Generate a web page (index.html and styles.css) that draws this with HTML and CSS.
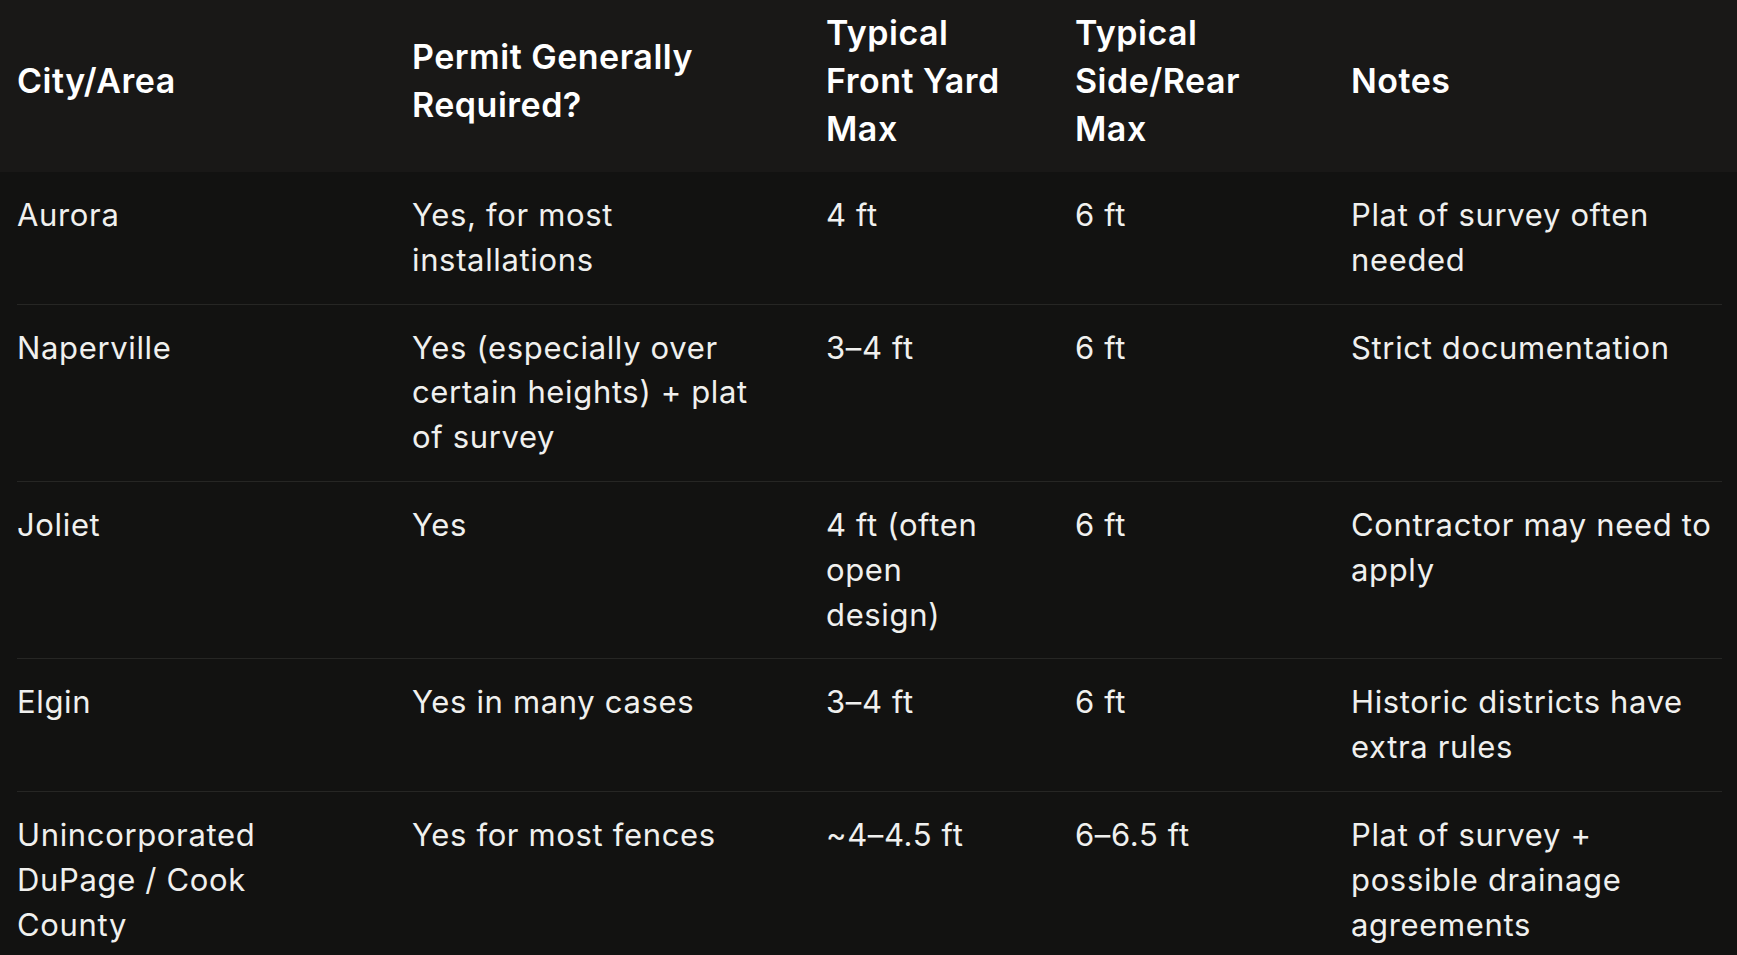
FILE: index.html
```html
<!DOCTYPE html>
<html>
<head>
<meta charset="utf-8">
<link rel="stylesheet" href="styles.css">
</head>
<body>
<div class="table">
  <div class="head">
    <div class="cell c1">City/Area</div>
    <div class="cell c2">Permit Generally Required?</div>
    <div class="cell c3">Typical Front Yard Max</div>
    <div class="cell c4">Typical Side/Rear Max</div>
    <div class="cell c5">Notes</div>
  </div>
  <div class="row">
    <div class="cell c1">Aurora</div>
    <div class="cell c2">Yes, for most installations</div>
    <div class="cell c3">4 ft</div>
    <div class="cell c4">6 ft</div>
    <div class="cell c5">Plat of survey often needed</div>
  </div>
  <div class="row">
    <div class="cell c1">Naperville</div>
    <div class="cell c2">Yes (especially over certain heights) + plat of survey</div>
    <div class="cell c3">3–4 ft</div>
    <div class="cell c4">6 ft</div>
    <div class="cell c5">Strict documentation</div>
  </div>
  <div class="row">
    <div class="cell c1">Joliet</div>
    <div class="cell c2">Yes</div>
    <div class="cell c3">4 ft (often open design)</div>
    <div class="cell c4">6 ft</div>
    <div class="cell c5">Contractor may need to apply</div>
  </div>
  <div class="row">
    <div class="cell c1">Elgin</div>
    <div class="cell c2">Yes in many cases</div>
    <div class="cell c3">3–4 ft</div>
    <div class="cell c4">6 ft</div>
    <div class="cell c5">Historic districts have extra rules</div>
  </div>
  <div class="row last">
    <div class="cell c1">Unincorporated DuPage / Cook County</div>
    <div class="cell c2">Yes for most fences</div>
    <div class="cell c3">~4–4.5 ft</div>
    <div class="cell c4">6–6.5 ft</div>
    <div class="cell c5">Plat of survey + possible drainage agreements</div>
  </div>
</div>
</body>
</html>
```

FILE: styles.css
```css
html, body {
  margin: 0;
  padding: 0;
  background: #121211;
  height: 100%;
  overflow: hidden;
}
body {
  font-family: Inter, "Noto Sans", sans-serif;
  color: #f0f0ee;
}
.table {
  width: 1737px;
}
.head, .row {
  display: grid;
  grid-template-columns: 395px 414px 249px 276px 1fr;
}
.head {
  box-sizing: border-box;
  background: #191817;
  height: 172px;
  padding: 0 15px 11px 17px;
  align-items: center;
  font-weight: 600;
  font-size: 34px;
  letter-spacing: 0.5px;
  line-height: 48px;
  color: #ffffff;
}
.row {
  margin: 0 15px 0 17px;
  border-bottom: 1px solid #262624;
  padding: 21px 0;
  font-size: 31px;
  letter-spacing: 0.65px;
  line-height: 44.8px;
  align-items: start;
}
.row.last {
  border-bottom: none;
}
.cell {
  padding-right: 70px;
}
.cell.c5 {
  padding-right: 0;
}
```
